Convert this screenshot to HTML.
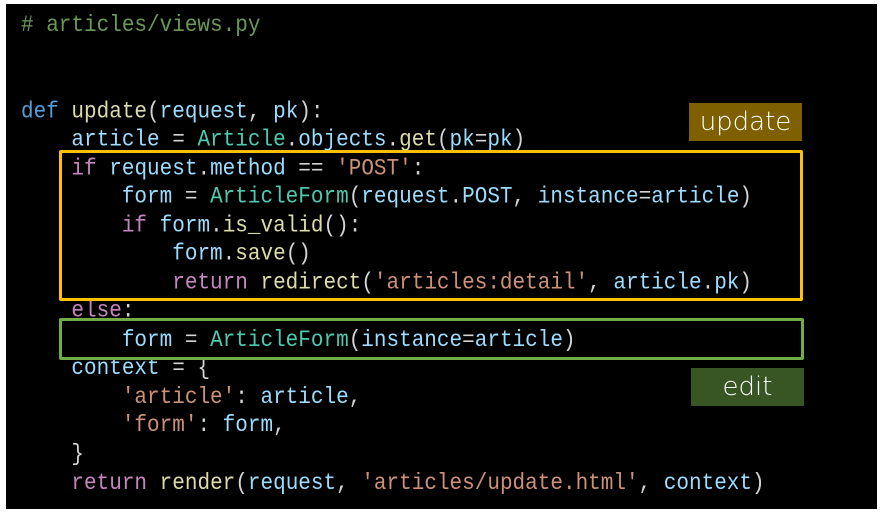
<!DOCTYPE html>
<html><head><meta charset="utf-8"><style>
body{margin:0;width:882px;height:514px;background:#fff;position:relative;overflow:hidden}
#bg{position:absolute;left:6px;top:4px;width:871px;height:505px;background:#000}
pre{position:absolute;left:21px;top:12px;margin:0;font-family:"Liberation Mono",monospace;font-size:21px;color:#d4d4d4;letter-spacing:0;transform:scaleY(1.12);transform-origin:0 0}
.c{color:#6a9955}.k{color:#569cd6}.f{color:#dcdcaa}.v{color:#9cdcfe}.t{color:#4ec9b0}.p{color:#c586c0}.s{color:#ce9178}
.box{position:absolute;box-sizing:border-box}
.lab{position:absolute;color:#fff;font-family:"DejaVu Sans",sans-serif;font-weight:200;font-size:26px;text-align:center;line-height:38px}
</style></head><body>
<div id="bg"></div>
<pre style="line-height:25.53px"><span class="c"># articles/views.py</span>


<span class="k">def</span> <span class="f">update</span>(<span class="v">request</span>, <span class="v">pk</span>):
    <span class="v">article</span> = <span class="t">Article</span>.<span class="v">objects</span>.<span class="f">get</span>(<span class="v">pk</span>=<span class="v">pk</span>)
    <span class="p">if</span> <span class="v">request</span>.<span class="v">method</span> == <span class="s">'POST'</span>:
        <span class="v">form</span> = <span class="t">ArticleForm</span>(<span class="v">request</span>.<span class="v">POST</span>, <span class="v">instance</span>=<span class="v">article</span>)
        <span class="p">if</span> <span class="v">form</span>.<span class="f">is_valid</span>():
            <span class="v">form</span>.<span class="f">save</span>()
            <span class="p">return</span> <span class="f">redirect</span>(<span class="s">'articles:detail'</span>, <span class="v">article</span>.<span class="v">pk</span>)
    <span class="p">else</span>:
        <span class="v">form</span> = <span class="t">ArticleForm</span>(<span class="v">instance</span>=<span class="v">article</span>)
    <span class="v">context</span> = {
        <span class="s">'article'</span>: <span class="v">article</span>,
        <span class="s">'form'</span>: <span class="v">form</span>,
    }
    <span class="p">return</span> <span class="f">render</span>(<span class="v">request</span>, <span class="s">'articles/update.html'</span>, <span class="v">context</span>)</pre>
<div class="box" style="left:59px;top:150px;width:744px;height:151px;border:3px solid #ffc000;border-radius:2px"></div>
<div class="box" style="left:59px;top:318px;width:745px;height:42px;border:3px solid #70ad47;border-radius:2px"></div>
<div class="lab" style="left:689px;top:103px;width:113px;height:38px;background:#7f6000">update</div>
<div class="lab" style="left:691px;top:368px;width:113px;height:38px;background:#375623">edit</div>
</body></html>
